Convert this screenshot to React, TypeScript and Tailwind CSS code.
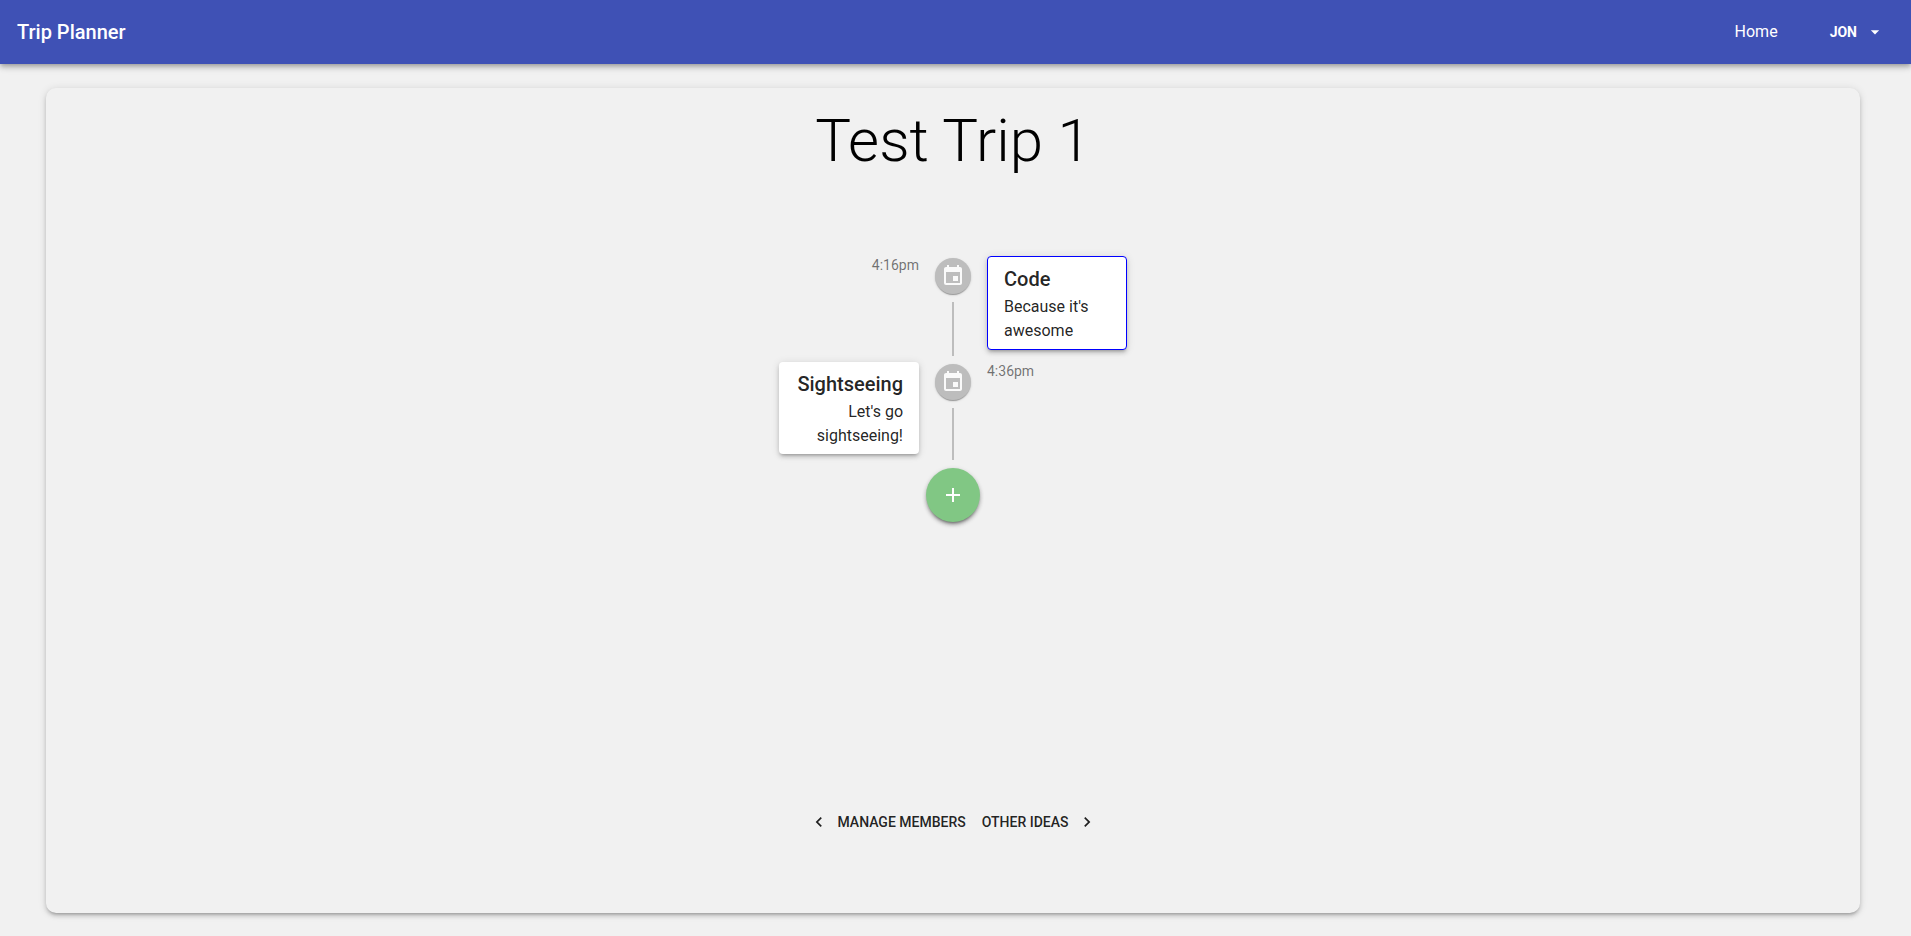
import { useState } from "react";
import {
  MdAdd,
  MdArrowDropDown,
  MdChevronLeft,
  MdChevronRight,
  MdEvent,
} from "react-icons/md";

type Activity = {
  time: string;
  title: string;
  description: string;
};

const activities: Activity[] = [
  { time: "4:16pm", title: "Code", description: "Because it's awesome" },
  { time: "4:36pm", title: "Sightseeing", description: "Let's go sightseeing!" },
];

function Header() {
  return (
    <header className="z-10 flex h-16 items-center justify-between bg-[#3f51b5] pr-[22px] pl-[17px] text-white shadow-[0_2px_4px_-1px_rgba(0,0,0,0.2),0_4px_5px_0_rgba(0,0,0,0.14),0_1px_10px_0_rgba(0,0,0,0.12)]">
      <span className="text-xl font-medium">Trip Planner</span>
      <nav className="flex items-center gap-11">
        <a href="#home" className="text-base">
          Home
        </a>
        <button
          type="button"
          className="flex items-center gap-2 px-2 py-2 text-sm font-bold"
        >
          JON
          <MdArrowDropDown className="-mr-1 size-5" aria-hidden="true" />
        </button>
      </nav>
    </header>
  );
}

function ActivityCard({
  activity,
  selected,
  onSelect,
}: {
  activity: Activity;
  selected: boolean;
  onSelect: () => void;
}) {
  return (
    <button
      type="button"
      onClick={onSelect}
      className={`block w-[140px] rounded bg-white px-4 py-1.5 text-black/87 shadow-[0_3px_3px_-2px_rgba(0,0,0,0.2),0_3px_4px_0_rgba(0,0,0,0.14),0_1px_8px_0_rgba(0,0,0,0.12)] [text-align:inherit] ${
        selected ? "border border-[#0000ff]" : ""
      }`}
    >
      <span className="block text-xl leading-8 font-medium">{activity.title}</span>
      <span className="block text-base">{activity.description}</span>
    </button>
  );
}

function TimelineRow({
  activity,
  reversed,
  selected,
  onSelect,
}: {
  activity: Activity;
  reversed: boolean;
  selected: boolean;
  onSelect: () => void;
}) {
  return (
    <li className={`flex ${reversed ? "flex-row-reverse text-left" : "text-right"}`}>
      <div className="flex-1 px-4 py-1.5">
        <time className="block text-sm leading-[18px] text-black/54">{activity.time}</time>
      </div>
      <div className="flex flex-col items-center">
        <span className="my-2 flex size-9 items-center justify-center rounded-full bg-[#bdbdbd] text-[#fafafa] shadow-[0_2px_1px_-1px_rgba(0,0,0,0.2),0_1px_1px_0_rgba(0,0,0,0.14),0_1px_3px_0_rgba(0,0,0,0.12)]">
          <MdEvent className="size-6" aria-hidden="true" />
        </span>
        <span className="w-0.5 grow bg-[#bdbdbd]" />
      </div>
      <div
        className={`flex flex-1 px-4 py-1.5 ${
          reversed ? "justify-end text-right" : "justify-start text-left"
        }`}
      >
        <ActivityCard activity={activity} selected={selected} onSelect={onSelect} />
      </div>
    </li>
  );
}

export default function App() {
  const [selected, setSelected] = useState(0);

  return (
    <div className="flex min-h-screen flex-col bg-[#f1f1f1] font-[Roboto,sans-serif] text-black">
      <Header />
      <main className="mt-6 mr-[51px] mb-[23px] ml-[46px] flex grow flex-col items-center rounded-[10px] pt-[17px] pb-[73px] shadow-[0_3px_3px_-2px_rgba(0,0,0,0.2),0_3px_4px_0_rgba(0,0,0,0.14),0_1px_8px_0_rgba(0,0,0,0.12)]">
        <h1 className="text-6xl leading-[72px] font-light">Test Trip 1</h1>
        <ul className="mt-[73px] w-full">
          {activities.map((activity, index) => (
            <TimelineRow
              key={activity.title}
              activity={activity}
              reversed={index % 2 === 1}
              selected={index === selected}
              onSelect={() => setSelected(index)}
            />
          ))}
          <li className="flex justify-center pt-2">
            <button
              type="button"
              aria-label="Add activity"
              className="flex size-[54px] items-center justify-center rounded-full bg-[#81c784] text-white shadow-[0_3px_3px_-2px_rgba(0,0,0,0.4),0_3px_4px_0_rgba(0,0,0,0.24),0_1px_5px_0_rgba(0,0,0,0.12)]"
            >
              <MdAdd className="size-6" aria-hidden="true" />
            </button>
          </li>
        </ul>
        <div className="mt-auto flex text-sm font-medium text-black/87">
          <button type="button" className="flex items-center gap-2 px-2 py-2">
            <MdChevronLeft className="-ml-1 size-5" aria-hidden="true" />
            MANAGE MEMBERS
          </button>
          <button type="button" className="flex items-center gap-2 px-2 py-2">
            OTHER IDEAS
            <MdChevronRight className="-mr-1 size-5" aria-hidden="true" />
          </button>
        </div>
      </main>
    </div>
  );
}
